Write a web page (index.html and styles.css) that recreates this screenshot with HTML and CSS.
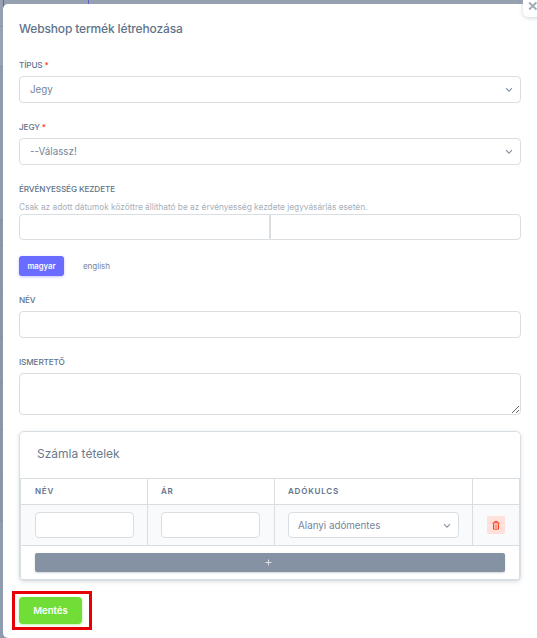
FILE: index.html
```
<!DOCTYPE html>
<html lang="hu">
<head>
    <meta charset="UTF-8">
    <meta name="viewport" content="width=device-width, initial-scale=1.0">
    <title>Webshop termék létrehozása</title>
    <link rel="stylesheet" href="styles.css">
</head>
<body>
    <div class="page-rows">
        <div class="row head"></div>
        <div class="row filter"></div>
        <div class="row gap"></div>
        <div class="row"></div>
        <div class="row"></div>
        <div class="row"></div>
        <div class="row"></div>
        <div class="row"></div>
        <div class="row"></div>
        <div class="row"></div>
    </div>
    <div class="page-tab"></div>

    <div class="modal">
        <button type="button" class="btn-close" aria-label="Bezárás">
            <svg width="10" height="10" viewBox="0 0 10 10"><path d="M1.2 1.5l7.2 7M8.4 1.5l-7.2 7" stroke="#a1acb8" stroke-width="1.9" fill="none"/></svg>
        </button>

        <h5 class="modal-title">Webshop termék létrehozása</h5>

        <form>
            <div class="field">
                <label class="form-label" for="type">Típus <span class="required">*</span></label>
                <div class="select-wrap">
                    <select id="type" class="form-control"><option>Jegy</option></select>
                    <svg class="chevron" width="8" height="6" viewBox="0 0 8 6"><path d="M1 1.2l3 3 3-3"/></svg>
                </div>
            </div>

            <div class="field">
                <label class="form-label" for="ticket">Jegy <span class="required">*</span></label>
                <div class="select-wrap">
                    <select id="ticket" class="form-control"><option>--Válassz!</option></select>
                    <svg class="chevron" width="8" height="6" viewBox="0 0 8 6"><path d="M1 1.2l3 3 3-3"/></svg>
                </div>
            </div>

            <div class="field dates">
                <label class="form-label" for="from">Érvényesség kezdete</label>
                <div class="form-text">Csak az adott dátumok közöttre állítható be az érvényesség kezdete jegyvásárlás esetén.</div>
                <div class="input-group">
                    <input type="text" id="from" class="form-control">
                    <input type="text" class="form-control">
                </div>
            </div>

            <div class="languages">
                <button type="button" class="lang active">magyar</button>
                <button type="button" class="lang">english</button>
            </div>

            <div class="field">
                <label class="form-label" for="name">Név</label>
                <input type="text" id="name" class="form-control">
            </div>

            <div class="field description">
                <label class="form-label" for="desc">Ismertető</label>
                <textarea id="desc" class="form-control"></textarea>
            </div>

            <div class="card">
                <h5 class="card-title">Számla tételek</h5>
                <table>
                    <colgroup><col class="col-name"><col class="col-price"><col class="col-tax"><col></colgroup>
                    <thead>
                        <tr><th>Név</th><th>Ár</th><th>Adókulcs</th><th></th></tr>
                    </thead>
                    <tbody>
                        <tr>
                            <td><input type="text" class="form-control"></td>
                            <td class="price"><input type="text" class="form-control"></td>
                            <td>
                                <div class="select-wrap">
                                    <select class="form-control"><option>Alanyi adómentes</option></select>
                                    <svg class="chevron" width="8" height="6" viewBox="0 0 8 6"><path d="M1 1.2l3 3 3-3"/></svg>
                                </div>
                            </td>
                            <td>
                                <button type="button" class="btn-delete" aria-label="Törlés">
                                    <svg width="8" height="9" viewBox="0 0 8 9" fill="none" stroke="#ff3e1d"><path d="M0.5 1.9h7M2.6 1.6V.6h2.8v1" stroke-width="1"/><path d="M1.5 2.3v5.8h5V2.3" stroke-width="1"/><path d="M3.2 3.6v3.2M4.8 3.6v3.2" stroke-width=".7"/></svg>
                                </button>
                            </td>
                        </tr>
                    </tbody>
                    <tfoot>
                        <tr>
                            <td colspan="4">
                                <button type="button" class="btn-add" aria-label="Új tétel"><svg width="7" height="7" viewBox="0 0 7 7"><path d="M3.5 0.5v6M0.5 3.5h6" stroke="#dde1e6" fill="none"/></svg></button>
                            </td>
                        </tr>
                    </tfoot>
                </table>
            </div>

            <div class="save-frame">
                <button type="button" class="btn-save">Mentés</button>
            </div>
        </form>
    </div>
</body>
</html>
```
FILE: styles.css
```
* {
    box-sizing: border-box;
}
body {
    margin: 0;
    height: 638px;
    padding: 4px 0 0 3px;
    overflow: hidden;
    position: relative;
    background: #8f9cae;
    font-family: Inter, "Liberation Sans", sans-serif;
    color: #697a8d;
}
button, input, select, textarea {
    font-family: inherit;
    margin: 0;
}

/* page behind the modal */
.page-rows {
    position: absolute;
    left: 0;
    top: 0;
    width: 100%;
}
.row {
    height: 46px;
    border-bottom: 1px solid #8190a3;
    border-left: 1px solid #8795a7;
    background: #8b99aa;
}
.row.head {
    height: 27px;
    border-left: 0;
    background: #95a1b1;
}
.row.filter {
    height: 40px;
    border-left: 0;
    background: #97a3b3;
}
.row.gap {
    height: 153px;
    border-left: 0;
    background: #8f9cae;
}
.row.gap + .row {
    height: 26px;
}
.page-tab {
    position: absolute;
    left: 3px;
    top: 0;
    width: 86px;
    height: 8px;
    border: 1px solid #5c62c8;
    border-width: 0 1px;
}

.modal {
    position: relative;
    height: 634px;
    padding: 0 16px;
    background: #fff;
    border-radius: 5px 0 0 5px;
}
.btn-close {
    position: absolute;
    right: -8px;
    top: -14px;
    width: 22px;
    height: 27px;
    padding: 0 0 2px 5px;
    border: 0;
    border-radius: 5px;
    background: #fff;
    box-shadow: 0 1px 4px rgba(161, 172, 184, 0.5);
    text-align: left;
}
.btn-close svg {
    display: block;
    margin-top: 7px;
}
.modal-title {
    margin: 0;
    padding-top: 17px;
    height: 54px;
    font-size: 12px;
    line-height: 16px;
    font-weight: 500;
    letter-spacing: -0.15px;
    color: #61738a;
}
.field {
    height: 62px;
}
.form-label {
    display: block;
    height: 18px;
    padding-top: 1px;
    font-size: 8.2px;
    line-height: 12px;
    font-weight: 500;
    letter-spacing: -0.13px;
    text-transform: uppercase;
    color: #61738a;
}
.required {
    color: #ff3e1d;
}
.form-control {
    display: block;
    width: 100%;
    height: 27px;
    padding: 0 10px;
    border: 1px solid #d9dee3;
    border-radius: 4px;
    background: #fff;
    color: #75859a;
    font-size: 9.8px;
    appearance: none;
    outline: 0;
}
.select-wrap {
    position: relative;
}
.chevron {
    position: absolute;
    right: 8px;
    top: 11px;
    fill: none;
    stroke: #8592a3;
    stroke-width: 1.1;
}
.dates {
    height: 74px;
}
.dates .form-label {
    height: 13px;
}
.form-text {
    padding-top: 6px;
    font-size: 8.3px;
    line-height: 12px;
    letter-spacing: -0.01px;
    color: #a6b0bb;
    white-space: nowrap;
}
.input-group {
    display: flex;
    margin-top: 1px;
}
.input-group .form-control {
    height: 26px;
}
.input-group .form-control:first-child {
    border-radius: 4px 0 0 4px;
}
.input-group .form-control:last-child {
    border-radius: 0 4px 4px 0;
}
.languages {
    display: flex;
    gap: 10px;
    height: 37px;
}
.lang {
    height: 20px;
    width: 45px;
    padding: 0;
    border: 0;
    border-radius: 3px;
    background: none;
    color: #75859a;
    font-size: 8px;
}
.lang.active {
    background: #696cff;
    color: #fff;
    font-weight: 600;
    font-size: 7.7px;
    box-shadow: 0 1px 3px rgba(105, 108, 255, 0.4);
}
textarea.form-control {
    height: 42px;
    resize: vertical;
}
.description {
    height: 76px;
}

.card {
    height: 150px;
    border: 1px solid #d9dee3;
    border-radius: 5px;
    box-shadow: 0 1px 4px rgba(67, 89, 113, 0.18);
}
.card-title {
    margin: 0;
    height: 46px;
    padding: 14px 0 0 17px;
    font-size: 12px;
    line-height: 16px;
    font-weight: 400;
    color: #697a8d;
}
table {
    width: 500px;
    border-collapse: collapse;
    table-layout: fixed;
}
.col-name, .col-price {
    width: 127px;
}
.col-tax {
    width: 198px;
}
th, td {
    border: 1px solid #d9dee3;
    padding: 0 13px;
    text-align: left;
}
th:first-child, td:first-child,
th:last-child, td:last-child {
    padding-left: 14px;
}
td.price {
    padding-right: 14px;
}
th {
    height: 26px;
    padding-bottom: 2px;
    font-size: 8px;
    letter-spacing: 0.8px;
    text-transform: uppercase;
    font-weight: 600;
    color: #61738a;
}
tbody td {
    height: 41px;
    background: #f9fafc;
}
td .form-control {
    height: 26px;
    padding-left: 9px;
}
.btn-delete {
    display: block;
    width: 18px;
    height: 18px;
    padding: 0;
    border: 0;
    border-radius: 2px;
    background: #ffe0db;
}
.btn-delete svg {
    display: block;
    margin: 0 auto;
}
tfoot td {
    height: 34px;
    padding-right: 14px;
}
.btn-add {
    display: block;
    width: 100%;
    height: 19px;
    padding: 0 3px 1px 0;
    border: 0;
    border-radius: 2px;
    background: #8592a3;
    box-shadow: 0 1px 2px rgba(133, 146, 163, 0.4);
}
.btn-add svg {
    display: block;
    margin: 0 auto;
}

.save-frame {
    width: 80px;
    height: 39px;
    margin: 10px 0 0 -7px;
    padding: 3px 4px;
    border: 3px solid #e80008;
}
.btn-save {
    display: block;
    width: 63px;
    height: 27px;
    padding: 0;
    border: 0;
    border-radius: 4px;
    background: #71dd37;
    color: #fff;
    font-size: 9.6px;
    font-weight: 600;
    box-shadow: 0 1px 3px rgba(113, 221, 55, 0.4);
}
```
